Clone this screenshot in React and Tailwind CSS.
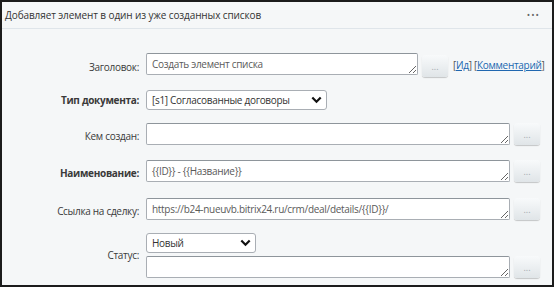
import React from 'react'

const font = { fontFamily: '"Open Sans", "Noto Sans", sans-serif' }

function Dots() {
  return (
    <button className="w-[26px] h-[22px] shrink-0 rounded-[3px] bg-gradient-to-b from-[#f8fafb] to-[#e0e5e8] shadow-[0_1px_1px_rgba(0,0,0,0.2)] text-[9px] leading-none tracking-normal text-[#a2a9ae] flex items-center justify-center">
      ...
    </button>
  )
}

function Field({ value, width }) {
  return (
    <textarea
      readOnly
      defaultValue={value}
      rows={1}
      className={`${width} h-[22px] shrink-0 bg-white border border-[#a9aeb4] border-t-[#8e959b] rounded-[2px] px-[5px] py-[3px] text-[10px] leading-[14px] tracking-[-0.3px] text-[#5a5a5a] overflow-hidden outline-none`}
    />
  )
}

function Select({ value, width }) {
  return (
    <div className={`${width} h-[20px] bg-white border border-[#a9aeb4] rounded-[3px] flex items-center justify-between pl-[5px] pr-[4px] text-[10px] text-[#333]`}>
      <span>{value}</span>
      <svg width="11" height="8" viewBox="0 0 11 8">
        <path d="M1.3 1.5 L5.5 5.7 L9.7 1.5" fill="none" stroke="#111" strokeWidth="2.2" />
      </svg>
    </div>
  )
}

function Row({ label, bold, children, low = true, className = '' }) {
  return (
    <div className={`grid grid-cols-[137px_1fr] gap-x-[7px] items-center ${className}`}>
      <div className={`text-right text-[10px] text-[#3a3a3a] ${low ? 'pt-[5px]' : ''} ${bold ? 'font-bold' : ''}`}>
        {label}
      </div>
      <div className="flex items-start gap-[4px]">{children}</div>
    </div>
  )
}

export default function App() {
  return (
    <div style={font} className="w-[555px] h-[288px] bg-white tracking-[-0.3px]">
      <div className="w-[554px] h-[287px] border-2 border-[#1c1c1c] bg-[#f5f7f8] flex flex-col">
        <div className="h-[27px] border-b border-[#dfe5ea] flex items-center justify-between pl-[3px] pr-[12px]">
          <span className="text-[10px] tracking-[-0.1px] text-[#333]">
            Добавляет элемент в один из уже созданных списков
          </span>
          <span className="text-[9px] tracking-[1px] text-[#666]">•••</span>
        </div>

        <Row label="Заголовок:" className="mt-[24px]">
          <Field value="Создать элемент списка" width="w-[272px]" />
          <div className="mt-[2px]">
            <Dots />
          </div>
          <span className="text-[10px] mt-[5px] ml-[1px] text-[#555]">
            [<span className="text-[#2067b0] underline">Ид</span>]{' '}
            [<span className="text-[#2067b0] underline">Комментарий</span>]
          </span>
        </Row>

        <Row label="Тип документа:" bold low={false} className="mt-[13px]">
          <Select value="[s1] Согласованные договоры" width="w-[181px]" />
        </Row>

        <Row label="Кем создан:" className="mt-[13px]">
          <Field value="" width="w-[364px]" />
          <Dots />
        </Row>

        <Row label="Наименование:" bold className="mt-[15px]">
          <Field value="{{ID}} - {{Название}}" width="w-[364px]" />
          <Dots />
        </Row>

        <Row label="Ссылка на сделку:" className="mt-[16px]">
          <Field value="https://b24-nueuvb.bitrix24.ru/crm/deal/details/{{ID}}/" width="w-[364px]" />
          <Dots />
        </Row>

        <Row label="Статус:" low={false} className="mt-[13px]">
          <div className="flex flex-col gap-[3px]">
            <Select value="Новый" width="w-[110px]" />
            <div className="flex items-start gap-[4px]">
              <Field value="" width="w-[364px]" />
              <Dots />
            </div>
          </div>
        </Row>
      </div>
    </div>
  )
}
